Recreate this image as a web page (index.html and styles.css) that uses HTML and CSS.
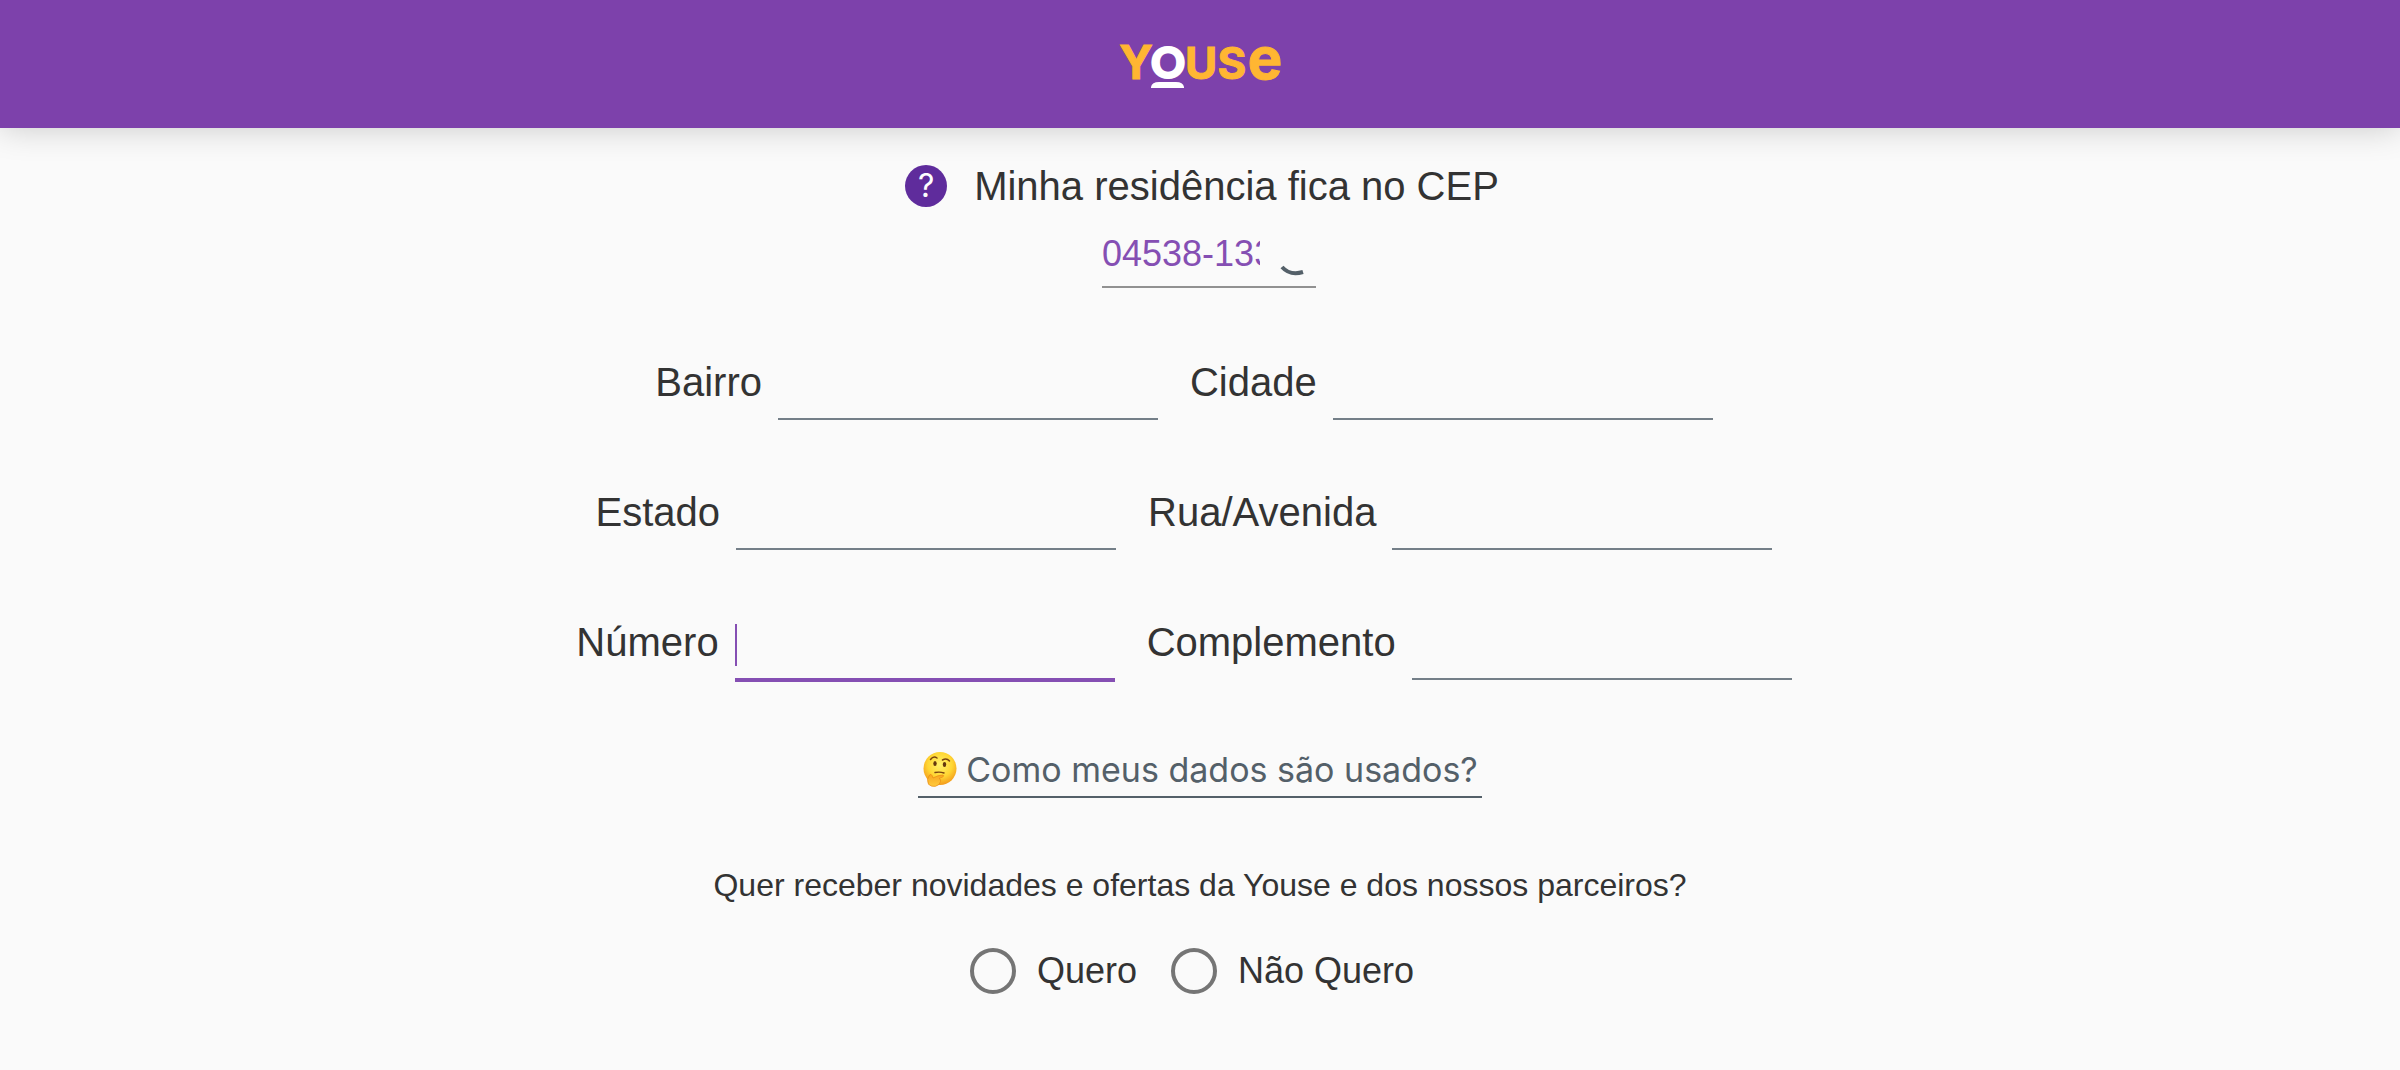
FILE: index.html
```html
<!DOCTYPE html>
<html lang="pt-BR">
<head>
<meta charset="utf-8">
<meta name="viewport" content="width=device-width, initial-scale=1">
<title>Youse</title>
<link rel="stylesheet" href="styles.css">
</head>
<body>
<header class="topbar">
  <a class="brand" href="#" aria-label="Youse">
    <svg class="brand-logo" viewBox="-6 -33 180 108" aria-hidden="true">
      <g class="brand-letters">
        <text class="brand-y" x="20" y="34">Y</text>
        <text class="brand-o" x="52" y="33">O</text>
        <text x="85" y="34">U</text>
        <text x="116" y="34">S</text>
        <text class="brand-e" x="149" y="34">e</text>
      </g>
      <path class="brand-bar" d="M35 43v-1q1-5 8-5h17q7 0 8 5v1z"/>
    </svg>
  </a>
</header>
<main class="page">
  <form class="quote">
    <div class="cep-title">
      <button class="help" type="button" aria-label="Ajuda">?</button>
      <label for="cep">Minha residência fica no CEP</label>
    </div>
    <div class="cep-field">
      <input class="cep-input" id="cep" type="text" value="04538-133">
      <svg class="spinner" viewBox="0 0 56 40" aria-hidden="true"><path d="M22 21Q30 30 43 26"/></svg>
    </div>

    <div class="rows">
      <div class="row">
        <label for="bairro">Bairro</label><input class="field" id="bairro" type="text">
        <label for="cidade">Cidade</label><input class="field" id="cidade" type="text">
      </div>
      <div class="row">
        <label for="estado">Estado</label><input class="field" id="estado" type="text">
        <label for="rua">Rua/Avenida</label><input class="field" id="rua" type="text">
      </div>
      <div class="row">
        <label for="numero">Número</label><span class="active"><input class="field" id="numero" type="text"></span>
        <label for="complemento">Complemento</label><input class="field" id="complemento" type="text">
      </div>
    </div>

    <a class="data-link" href="#">
      <svg class="emoji" viewBox="0 0 36 36" aria-hidden="true">
        <defs>
          <radialGradient id="face" cx=".5" cy=".38" r=".62"><stop offset="0" stop-color="#fff26b"/><stop offset=".6" stop-color="#ffd633"/><stop offset="1" stop-color="#f39a1c"/></radialGradient>
          <linearGradient id="hand" x1="0" y1="0" x2="0" y2="1"><stop offset="0" stop-color="#f7a51f"/><stop offset="1" stop-color="#ffcb3d"/></linearGradient>
        </defs>
        <circle cx="18" cy="16.500" r="16.500" fill="url(#face)"/>
        <ellipse cx="13" cy="11.500" rx="1.700" ry="2.600" fill="#64380e"/>
        <ellipse cx="22.500" cy="12.500" rx="1.700" ry="2.600" fill="#64380e"/>
        <path d="M8.500 7.500q3-4 6.500-1.500M20.500 8q4-2.500 7 1" fill="none" stroke="#7a4510" stroke-width="1.500" stroke-linecap="round"/>
        <path d="M13 20.500q5-1 9 .5" fill="none" stroke="#7a4510" stroke-width="1.400" stroke-linecap="round"/>
        <path d="M7.500 23q1.500-1.500 2.500.5l1 2.500q5-3 10-3 1.500.800 0 1.800l-4 1.700q2.500 1 1.500 3-.5 3.500-5 4.800-4 .800-7-2-2.500-5 1-9.300z" fill="url(#hand)" stroke="#e98a12" stroke-width=".7"/>
      </svg>
      <span>Como meus dados são usados?</span>
    </a>

    <fieldset class="optin">
      <legend>Quer receber novidades e ofertas da Youse e dos nossos parceiros?</legend>
      <div class="options">
        <label class="option"><input type="radio" name="ofertas" value="sim">Quero</label>
        <label class="option"><input type="radio" name="ofertas" value="nao">Não Quero</label>
      </div>
    </fieldset>
  </form>
</main>
</body>
</html>
```
FILE: styles.css
```css
* { box-sizing: border-box; }

body {
  margin: 0;
  min-height: 100vh;
  background: #fafafa;
  color: #333;
  font-family: "Liberation Sans", Arial, sans-serif;
  font-size: 40px;
  line-height: 48px;
}

input, button { font: inherit; color: inherit; }

.topbar {
  display: flex;
  justify-content: center;
  padding: 12px 0 8px;
  background: #7d41ab;
  box-shadow: 0 0 32px rgba(0, 0, 0, .2);
}

.brand { display: block; }
.brand-logo { display: block; width: 180px; height: 108px; }
.brand-letters {
  fill: #ffb632;
  stroke: #ffb632;
  stroke-width: 1px;
  font-family: Inter, sans-serif;
  font-size: 44px;
  font-weight: 700;
  text-anchor: middle;
}
.brand-y { font-size: 46px; }
.brand-o {
  fill: #fff;
  stroke: #fff;
  stroke-width: 2px;
  font-family: Lato, sans-serif;
  font-size: 42px;
  font-weight: 900;
}
.brand-bar { fill: #fff; }
.brand-e { font-size: 58px; }

.page { padding: 34px 24px 48px; }

.quote {
  display: flex;
  flex-direction: column;
  align-items: center;
}

.cep-title {
  display: flex;
  align-items: center;
  gap: 27px;
  padding-left: 4px;
}

.help {
  width: 42px;
  height: 42px;
  padding: 0;
  border: 0;
  border-radius: 50%;
  background: #5f2c9c;
  color: #fff;
  font-family: Inter, sans-serif;
  font-size: 32px;
  line-height: 42px;
}

.cep-field {
  display: flex;
  align-items: flex-end;
  margin: 12px 0 0 18px;
  border-bottom: 2px solid #919191;
}

.cep-input {
  width: 158px;
  height: 64px;
  padding: 0;
  border: 0;
  outline: 0;
  background: none;
  color: #854fb3;
  font-size: 36px;
}

.spinner {
  width: 56px;
  height: 40px;
  fill: none;
  stroke: #546069;
  stroke-width: 4;
}

.rows {
  display: grid;
  gap: 68px;
  margin-top: 70px;
}

.row {
  display: flex;
  justify-content: center;
  align-items: flex-start;
  height: 62px;
  padding-right: 32px;
}

.row label { margin: 0 16px 0 32px; }
.row label:first-child { margin-left: 0; }

.field {
  display: block;
  width: 380px;
  height: 62px;
  padding: 0;
  border: 0;
  border-bottom: 2px solid #747f88;
  border-radius: 0;
  outline: 0;
  background: none;
}

.active { position: relative; }
.active .field {
  height: 64px;
  border-bottom: 4px solid #854fb3;
}
.active::before {
  content: "";
  position: absolute;
  top: 6px;
  left: 0;
  width: 2px;
  height: 42px;
  background: #854fb3;
}

.data-link {
  display: flex;
  align-items: center;
  gap: 8px;
  margin-top: 68px;
  padding: 0 4px 4px;
  border-bottom: 2px solid #546069;
  color: #546069;
  font-family: Inter, sans-serif;
  font-size: 34px;
  line-height: 44px;
  text-decoration: none;
}
.emoji { width: 36px; height: 36px; }

.optin {
  margin: 67px 0 0;
  padding: 0;
  border: 0;
}
.optin legend {
  padding: 0;
  font-size: 32px;
  line-height: 40px;
}

.options {
  display: flex;
  justify-content: center;
  gap: 34px;
  margin-top: 42px;
  padding-right: 16px;
}

.option {
  display: flex;
  align-items: center;
  gap: 21px;
  font-size: 36px;
}
.option input {
  appearance: none;
  width: 46px;
  height: 46px;
  margin: 0;
  border: 4px solid #757575;
  border-radius: 50%;
}
```
